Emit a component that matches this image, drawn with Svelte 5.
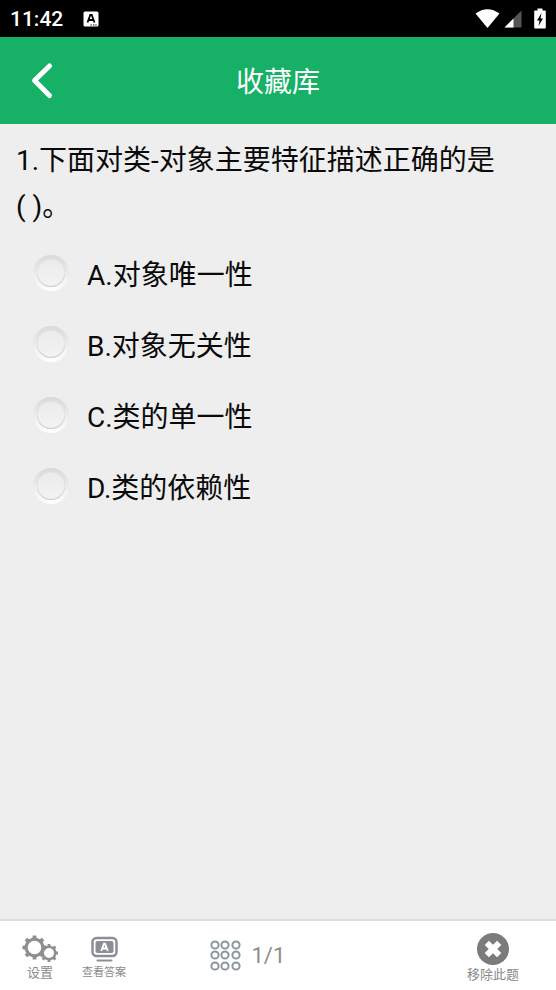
<script>
  let selected = $state('');

  const question = {
    index: 1,
    // nbsp keeps the brackets together on one line
    title: '下面对类-对象主要特征描述正确的是(\u00a0)。',
    options: [
      { key: 'A', text: '对象唯一性' },
      { key: 'B', text: '对象无关性' },
      { key: 'C', text: '类的单一性' },
      { key: 'D', text: '类的依赖性' }
    ]
  };
  const total = 1;
  const dots = [5, 15, 26];

  // outline of a cog with 8 teeth, the hole is cut out with evenodd
  function gearPath(cx, cy, outer, inner, hole) {
    const teeth = 8;
    const step = (Math.PI * 2) / teeth;
    const points = [];
    for (let i = 0; i < teeth; i++) {
      const a = i * step - Math.PI / 2;
      for (const [offset, r] of [[-0.25, inner], [-0.19, outer], [0.19, outer], [0.25, inner]]) {
        const t = a + offset * step;
        points.push(`${(cx + r * Math.cos(t)).toFixed(2)} ${(cy + r * Math.sin(t)).toFixed(2)}`);
      }
    }
    return `M${points.join('L')}Z M${cx - hole} ${cy}a${hole} ${hole} 0 1 0 ${hole * 2} 0a${hole} ${hole} 0 1 0 ${-hole * 2} 0Z`;
  }
</script>

<div class="app">
  <div class="status-bar">
    <span class="time">11:42</span>
    <svg class="ime" width="16" height="16" viewBox="0 0 16 16" aria-hidden="true">
      <rect x="0.5" y="0.5" width="15" height="15" rx="1.5" fill="#fff" />
      <path d="M4.500 11.500 7.300 4h1.400l2.800 7.500M5.800 9h4.400" fill="none" stroke="#000" stroke-width="1.800" />
      <path d="M7.500 14h1.300M10 14h1.300M12.300 14h1.300" stroke="#000" stroke-width="1.200" />
    </svg>
    <div class="status-icons">
      <svg width="25" height="20" viewBox="0 0 25 20" aria-hidden="true">
        <path d="M0.500 4.500Q12.500-4 24.500 4.500L12.500 19Z" fill="#fff" />
      </svg>
      <svg class="signal" width="18" height="18" viewBox="0 0 18 18" aria-hidden="true">
        <path d="M17.500 0.500V17.500H0.500Z" fill="#555" />
        <path d="M9.500 8.500V17.500H0.500Z" fill="#fff" />
      </svg>
      <svg class="battery" width="12" height="21" viewBox="0 0 12 21" aria-hidden="true">
        <path d="M3.500 0.500h5v2H11a.8.8 0 0 1 .8.800V19.500a1 1 0 0 1-1 1H1.200a1 1 0 0 1-1-1V3.300a.8.8 0 0 1 .8-.8h2.500Z" fill="#fff" />
        <path d="M7.500 5 3 12.500h2.500L4.500 18 9 10.500H6.500Z" fill="#000" />
      </svg>
    </div>
  </div>

  <header>
    <button class="back" aria-label="返回">
      <svg width="24" height="38" viewBox="0 0 24 38" aria-hidden="true">
        <path d="M19.500 4 4.500 18.500 19.500 33.500" fill="none" stroke="#fff" stroke-width="5" stroke-linecap="round" stroke-linejoin="round" />
      </svg>
    </button>
    <h1>收藏库</h1>
  </header>

  <main>
    <p class="question" id="question">{question.index}.{question.title}</p>
    <div class="options" role="radiogroup" aria-labelledby="question">
      {#each question.options as option}
        <label class="option">
          <input type="radio" name="answer" value={option.key} bind:group={selected} />
          <span>{option.key}.{option.text}</span>
        </label>
      {/each}
    </div>
  </main>

  <footer>
    <button class="tool">
      <svg width="36" height="28" viewBox="0 0 36 28" aria-hidden="true">
        <path d={gearPath(12.5, 12.5, 12.2, 10, 6.8)} fill="#8f8f8f" fill-rule="evenodd" />
        <path d={gearPath(27, 18, 9.2, 7.5, 5)} fill="#8f8f8f" fill-rule="evenodd" />
      </svg>
      <span>设置</span>
    </button>
    <button class="tool small">
      <svg width="28" height="28" viewBox="0 0 28 28" aria-hidden="true">
        <rect x="2.500" y="3" width="24" height="18" rx="4" fill="none" stroke="#8b8e99" stroke-width="2.500" />
        <rect x="5.500" y="6" width="18" height="12" rx="2" fill="#8b8e93" />
        <path d="M11.200 16 14 8.800h1L17.800 16M12.300 13.500h4.400" fill="none" stroke="#fff" stroke-width="1.900" />
        <path d="M7.500 25.500h14" stroke="#8b8e99" stroke-width="2" stroke-linecap="round" />
      </svg>
      <span>查看答案</span>
    </button>
    <button class="counter">
      <svg width="31" height="31" viewBox="0 0 31 31" aria-hidden="true">
        {#each dots as y}
          {#each dots as x}
            <circle cx={x} cy={y} r="3.600" fill="none" stroke="#8b979d" stroke-width="2" />
          {/each}
        {/each}
      </svg>
      <span>{question.index}/{total}</span>
    </button>
    <button class="tool remove">
      <svg width="32" height="32" viewBox="0 0 32 32" aria-hidden="true">
        <circle cx="16" cy="16" r="16" fill="#7b7b7b" />
        <path d="M9.800 9.800 22.200 22.200M22.200 9.800 9.800 22.200" stroke="#fff" stroke-width="6" />
      </svg>
      <span>移除此题</span>
    </button>
  </footer>
</div>

<style>
  :global(body) {
    margin: 0;
    background: #eee;
  }

  .app {
    display: flex;
    flex-direction: column;
    min-height: 100vh;
    background: #eee;
    color: #0a0a0a;
    font-family: Roboto, "Noto Sans CJK SC", sans-serif;
  }

  button {
    margin: 0;
    padding: 0;
    border: none;
    background: none;
    font-family: inherit;
    cursor: pointer;
  }

  svg {
    display: block;
    flex-shrink: 0;
  }

  .status-bar {
    display: flex;
    align-items: center;
    height: 37px;
    padding: 0 10px;
    background: #000;
    color: #fff;
  }

  .time {
    font-size: 21px;
    font-weight: 500;
    line-height: 38px;
  }

  .ime {
    margin-left: 20px;
  }

  .status-icons {
    display: flex;
    align-items: center;
    margin-left: auto;
  }

  .signal {
    margin-left: 4px;
  }

  .battery {
    margin-left: 12px;
  }

  header {
    display: grid;
    grid-template-columns: 64px 1fr 64px;
    align-items: center;
    height: 87px;
    background: #16b067;
    color: #fff;
  }

  .back {
    display: flex;
    justify-content: flex-end;
    padding: 12px 10px 12px 0;
  }

  h1 {
    margin: 0;
    padding-top: 4px;
    font-size: 28px;
    font-weight: 400;
    line-height: 40px;
    text-align: center;
  }

  main {
    flex: 1;
    padding: 14px 16px;
  }

  .question {
    margin: 0 0 7px;
    font-size: 28px;
    line-height: 46px;
  }

  .option {
    display: flex;
    align-items: center;
    gap: 18px;
    height: 71px;
    padding-left: 17px;
    font-size: 28px;
    cursor: pointer;
  }

  .option input {
    appearance: none;
    flex-shrink: 0;
    box-sizing: border-box;
    width: 36px;
    height: 36px;
    margin: 0;
    border: 4px solid transparent;
    border-radius: 50%;
    background:
      linear-gradient(#ebebeb, #f3f3f3) padding-box,
      linear-gradient(#d9d9d9, #ebebeb 50%, #fff) border-box;
    box-shadow: inset 0 -1px 1px #cacaca, inset 0 0 1px #d0d0d0;
    cursor: pointer;
  }

  .option input:checked {
    background:
      radial-gradient(circle, #16b067 0 6px, #efefef 7px) padding-box,
      linear-gradient(#d9d9d9, #ebebeb 50%, #fff) border-box;
  }

  footer {
    display: flex;
    align-items: center;
    box-sizing: border-box;
    height: 71px;
    padding: 0 37px 0 22px;
    border-top: 2px solid #ddd;
    background: #fff;
  }

  .tool {
    display: flex;
    flex-direction: column;
    align-items: center;
    gap: 2px;
    padding-top: 4px;
    color: #8a8a8a;
    font-size: 13px;
    line-height: 16px;
  }

  .small {
    margin-left: 24px;
    font-size: 11px;
  }

  .counter {
    display: flex;
    align-items: center;
    gap: 10px;
    margin-left: 17%;
    color: #8c8c8c;
    font-size: 22px;
    line-height: 31px;
  }

  .remove {
    margin-left: auto;
  }
</style>
